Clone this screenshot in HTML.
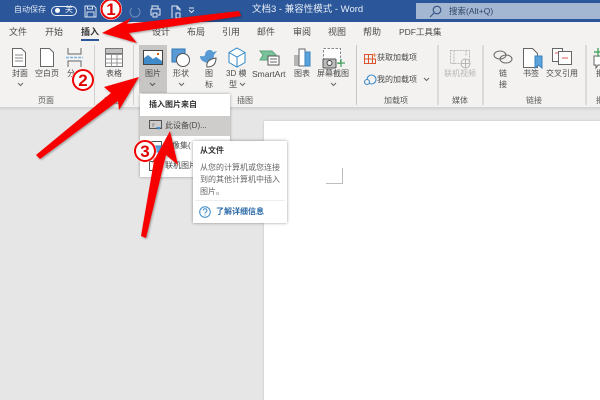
<!DOCTYPE html>
<html><head><meta charset="utf-8">
<style>
html,body{margin:0;padding:0;width:600px;height:400px;overflow:hidden;background:#e6e6e6}
body{position:relative;font-family:"Liberation Sans","Noto Sans CJK SC",sans-serif;color:#444}
#w{position:absolute;left:0;top:0;width:600px;height:400px;filter:blur(.3px)}
.a{position:absolute}
.t{position:absolute;white-space:nowrap;font-size:8px;line-height:12px;color:#4a4a4a;text-align:left}
.tab{position:absolute;top:26px;font-size:9px;line-height:12px;color:#4a4a4a;white-space:nowrap}
.g{position:absolute;top:95px;font-size:8px;line-height:12px;color:#5a5a5a;white-space:nowrap}
.sep{position:absolute;top:45px;width:1px;height:60px;background:#c8c6c4}
svg{position:absolute;overflow:visible}
</style></head><body><div id="w">
<div class="a" style="left:0;top:0;width:600px;height:22px;background:#2b579a"></div>
<div class="a" style="left:0;top:22px;width:600px;height:85px;background:#f3f2f1"></div>
<div class="a" style="left:0;top:107px;width:600px;height:4px;background:linear-gradient(#cfcfcf,#e6e6e6)"></div>
<div class="a" style="left:264px;top:121px;width:336px;height:279px;background:#fff;box-shadow:0 0 2px #bbb"></div>

<!-- title bar -->
<div class="t" style="left:14px;top:4px;color:#dfe6f2">自动保存</div>
<div class="a" style="left:51px;top:6px;width:24px;height:8px;border:1px solid #e8edf5;border-radius:6px"></div>
<div class="a" style="left:55px;top:8px;width:5px;height:5px;border-radius:50%;background:#fff"></div>
<div class="t" style="left:65px;top:4px;color:#e8edf5">关</div>
<svg style="left:84px;top:5px" width="13" height="13" viewBox="0 0 13 13" fill="none" stroke="#d5dfee"><path d="M1 1h9l2 2v9H1zM3.500 1v3h5V1M3 12V7h7v5"/></svg>
<svg style="left:129px;top:6px" width="12" height="12" viewBox="0 0 12 12" fill="none" stroke="#6f8dbb"><path d="M3 2a5 5 0 1 0 6 0"/></svg>
<svg style="left:149px;top:5px" width="13" height="13" viewBox="0 0 13 13" fill="none" stroke="#e4eaf3"><path d="M3 4V1h6v3M2 4h9v6H9M3 10H2V4M4 8h4v4H4z"/></svg>
<svg style="left:170px;top:5px" width="12" height="14" viewBox="0 0 12 14" fill="none" stroke="#e4eaf3"><path d="M2 13V1h5l3 3v2M7 1v3h3M6 8h4v5H6z"/></svg>
<svg style="left:188px;top:8px" width="7" height="5" viewBox="0 0 7 5" fill="none" stroke="#dfe6f2"><path d="M1 0h5M1 2l2.500 2.500L6 2"/></svg>
<div class="t" style="left:252px;top:4px;color:#e6ecf5;font-size:9.500px">文档3 - 兼容性模式 - Word</div>
<div class="a" style="left:416px;top:3px;width:184px;height:16px;background:#a3b6d2"></div>
<svg style="left:429px;top:5px" width="13" height="13" viewBox="0 0 13 13" fill="none" stroke="#33527f" stroke-width="1.100"><circle cx="8" cy="5" r="3.800"/><path d="M5 8l-4 4"/></svg>
<div class="t" style="left:449px;top:5px;color:#2f4668;font-size:8.500px">搜索(Alt+Q)</div>

<!-- tabs -->
<div class="tab" style="left:9px">文件</div>
<div class="tab" style="left:45px">开始</div>
<div class="tab" style="left:81px;font-weight:bold;color:#333">插入</div>
<div class="a" style="left:81px;top:39px;width:18px;height:2px;background:#2b579a"></div>
<div class="tab" style="left:152px">设计</div>
<div class="tab" style="left:187px">布局</div>
<div class="tab" style="left:222px">引用</div>
<div class="tab" style="left:257px">邮件</div>
<div class="tab" style="left:293px">审阅</div>
<div class="tab" style="left:328px">视图</div>
<div class="tab" style="left:363px">帮助</div>
<div class="tab" style="left:399px;font-size:8.500px">PDF工具集</div>

<!-- separators -->
<div class="sep" style="left:94px;background:#d2d0ce"></div>
<div class="sep" style="left:133px;background:#d2d0ce"></div>
<div class="sep" style="left:356px"></div>
<div class="sep" style="left:437px;width:2px;background:#dcdad8"></div>
<div class="sep" style="left:482px;width:2px;background:#dcdad8"></div>
<div class="sep" style="left:585px;width:2px;background:#dcdad8"></div>

<!-- pages group -->
<svg style="left:12px;top:48px" width="14" height="19" viewBox="0 0 14 19" fill="#fff" stroke="#666"><path d="M.5.500h9l4 4v14H.5z"/><path d="M3 7h8M3 10h8M3 13h8" stroke="#888"/></svg>
<div class="t" style="left:12px;top:68px">封面</div>
<svg style="left:17px;top:83px" width="7" height="4" fill="none" stroke="#666"><path d="M1 0l2.500 2.500L6 0"/></svg>
<svg style="left:40px;top:48px" width="14" height="19" viewBox="0 0 14 19" fill="#fff" stroke="#666"><path d="M.5.500h9l4 4v14H.5z"/></svg>
<div class="t" style="left:35px;top:68px">空白页</div>
<svg style="left:66px;top:48px" width="17" height="19" viewBox="0 0 17 19" fill="none" stroke="#666"><path d="M2 0v6h13V0M2 19v-6h13v6"/><path d="M0 9.500h17" stroke="#7fb2dd" stroke-width="1.500" stroke-dasharray="3 1"/></svg>
<div class="t" style="left:67px;top:68px">分</div>
<div class="g" style="left:38px">页面</div>

<!-- table -->
<svg style="left:105px;top:48px" width="18" height="19" viewBox="0 0 18 19" fill="#fff" stroke="#777"><path d="M.5.500h17v18H.5z"/><path d="M6.500 .5v18M12 .5v18M.5 6.500h17M.5 11h17M.5 15h17" stroke="#999"/><path d="M.5 .5h17v5H.5z" fill="#c0c0c0"/></svg>
<div class="t" style="left:106px;top:68px">表格</div>
<div class="g" style="left:104px">表格</div>

<!-- pictures -->
<div class="a" style="left:139px;top:45px;width:28px;height:48px;background:#c8c6c4"></div>
<svg style="left:143px;top:50px" width="20" height="15" viewBox="0 0 20 15"><rect x=".5" y=".5" width="19" height="14" fill="#fff" stroke="#444"/><path d="M1 14V8l4-3 5 4 3-2 6 4v3z" fill="#3f8bc9"/><rect x="14" y="3" width="2" height="2" fill="#c55a11"/></svg>
<div class="t" style="left:145px;top:68px">图片</div>
<svg style="left:149px;top:83px" width="7" height="4" fill="none" stroke="#555"><path d="M1 0l2.500 2.500L6 0"/></svg>

<svg style="left:171px;top:48px" width="20" height="20" viewBox="0 0 20 20"><rect x="1" y="1" width="13" height="13" fill="#5b9bd5" stroke="#2e75b6"/><circle cx="12" cy="12" r="6.500" fill="#fff" stroke="#555"/></svg>
<div class="t" style="left:173px;top:68px">形状</div>
<svg style="left:178px;top:83px" width="7" height="4" fill="none" stroke="#666"><path d="M1 0l2.500 2.500L6 0"/></svg>

<svg style="left:199px;top:47px" width="19" height="22" viewBox="0 0 19 22"><path d="M1 9c2 0 4 1 5-1 0-5 6-7 8-3 1 0 3-1 4-1l-3 4c0 4-2 7-6 8-5-1-8-3-8-7z" fill="#5b9bd5"/><path d="M8 20c-1-5 2-8 9-9 0 6-3 9-9 9z" fill="#fff" stroke="#555"/></svg>
<div class="t" style="left:205px;top:68px">图</div>
<div class="t" style="left:205px;top:79px">标</div>

<svg style="left:228px;top:47px" width="18" height="21" viewBox="0 0 18 21" fill="#fff" stroke="#2f86c5"><path d="M9 1l8 4.500v10L9 20l-8-4.500v-10z"/><path d="M1 5.500L9 10l8-4.500M9 10v10" fill="none"/></svg>
<div class="t" style="left:226px;top:68px">3D 模</div>
<div class="t" style="left:229px;top:79px">型</div>
<svg style="left:239px;top:83px" width="7" height="4" fill="none" stroke="#666"><path d="M1 0l2.500 2.500L6 0"/></svg>

<svg style="left:260px;top:50px" width="19" height="16" viewBox="0 0 19 16"><path d="M0 1h12l4 4-3 5H0l3-5z" fill="#7ac29a" stroke="#5aa77f"/><rect x="8" y="6" width="11" height="9" fill="#fff" stroke="#555"/><path d="M10 9h7M10 12h7" stroke="#666"/></svg>
<div class="t" style="left:252px;top:68px;font-size:8.500px">SmartArt</div>

<svg style="left:293px;top:48px" width="18" height="19" viewBox="0 0 18 19"><rect x="1" y="7" width="6" height="11" fill="#b5b5b5"/><rect x="6" y="1" width="6" height="17" fill="#fff" stroke="#666"/><rect x="12" y="4" width="5" height="14" fill="#5ba3dc" stroke="#3b83bd"/></svg>
<div class="t" style="left:294px;top:68px">图表</div>

<svg style="left:323px;top:48px" width="22" height="20" viewBox="0 0 22 20"><rect x=".5" y=".5" width="17" height="15" fill="#fff" stroke="#888" stroke-dasharray="2.500 1.500"/><rect x="0" y="11" width="13" height="9" rx="1" fill="#bdbdbd" stroke="#555"/><circle cx="6.500" cy="15" r="2.500" fill="#eee" stroke="#444"/><path d="M18 11v8M14 15h8" stroke="#3fa35a" stroke-width="1.200"/></svg>
<div class="t" style="left:317px;top:68px">屏幕截图</div>
<svg style="left:330px;top:83px" width="7" height="4" fill="none" stroke="#666"><path d="M1 0l2.500 2.500L6 0"/></svg>
<div class="g" style="left:237px">插图</div>

<!-- addins -->
<svg style="left:364px;top:53px" width="13" height="11" viewBox="0 0 13 11" fill="none" stroke="#d8552d"><path d="M.5 1.500h8v9h-8zM.5 6h11v4.500h-3M4.500 1.500v9"/><path d="M10.500 0v4M8.500 2h4" stroke="#e58a5e"/></svg>
<div class="t" style="left:377px;top:52px">获取加载项</div>
<svg style="left:364px;top:75px" width="13" height="10" viewBox="0 0 13 10" fill="none" stroke="#3f8bc9" stroke-width="1.100"><circle cx="7.500" cy="4.500" r="4.500"/><circle cx="3" cy="7" r="2.500" fill="#f3f2f1"/></svg>
<div class="t" style="left:377px;top:74px">我的加载项</div>
<svg style="left:423px;top:78px" width="7" height="4" fill="none" stroke="#666"><path d="M1 0l2.500 2.500L6 0"/></svg>
<div class="g" style="left:384px">加载项</div>

<!-- media -->
<svg style="left:450px;top:50px" width="21" height="19" viewBox="0 0 21 19" fill="none" stroke="#b5b5b5"><path d="M.5.500h19v13H.5zM4 .5v13M16 .5v6" stroke-dasharray="2 1"/><circle cx="15.500" cy="13.500" r="4.500" fill="#f3f2f1"/><path d="M11 13.500h9M15.500 9v9"/></svg>
<div class="t" style="left:444px;top:68px;color:#b8b6b4">联机视频</div>
<div class="g" style="left:452px">媒体</div>

<!-- links -->
<svg style="left:493px;top:50px" width="20" height="14" viewBox="0 0 20 14" fill="none" stroke="#666"><ellipse cx="7" cy="5" rx="6" ry="4"/><ellipse cx="13" cy="9" rx="6" ry="4"/></svg>
<div class="t" style="left:499px;top:68px">链</div>
<div class="t" style="left:499px;top:79px">接</div>
<svg style="left:523px;top:48px" width="20" height="20" viewBox="0 0 20 20"><path d="M.5.500h9l5 5v14H.5z" fill="#fff" stroke="#666"/><path d="M12 8h7v12l-3.500-3-3.500 3z" fill="#5ba3dc" stroke="#3b83bd"/></svg>
<div class="t" style="left:523px;top:68px">书签</div>
<svg style="left:552px;top:48px" width="20" height="17" viewBox="0 0 20 17"><path d="M.5.500h10v13H.5z" fill="#fff" stroke="#666"/><path d="M6.500 3.500h13v13h-13z" fill="#fff" stroke="#666"/><path d="M3 5h3M10 10h6" stroke="#e05a5a"/></svg>
<div class="t" style="left:546px;top:68px">交叉引用</div>
<div class="g" style="left:526px">链接</div>

<!-- right clipped -->
<svg style="left:594px;top:47px" width="8" height="22" viewBox="0 0 8 22"><path d="M0 9h8v9H4l-2 3v-3H0z" fill="#fff" stroke="#666"/><path d="M4 1v9M0 5h8" stroke="#4ca864" stroke-width="1.400"/></svg>
<div class="t" style="left:596px;top:68px">批</div>
<div class="g" style="left:596px">批</div>

<!-- dropdown -->
<div class="a" style="left:140px;top:94px;width:90px;height:83px;background:#fff;box-shadow:0 0 3px rgba(0,0,0,.35)"></div>
<div class="t" style="left:149px;top:99px;color:#333;font-weight:bold">插入图片来自</div>
<div class="a" style="left:140px;top:116px;width:90px;height:20px;background:#cfcdcb"></div>
<svg style="left:149px;top:120px" width="13" height="12" viewBox="0 0 13 12" fill="none" stroke="#555"><path d="M.5.500h12v8H.5z"/><path d="M3 4h3M3 6h2" stroke="#888"/><path d="M7 7h5l-2.500 3z" fill="#4a90d0" stroke="none"/></svg>
<div class="t" style="left:165px;top:120px">此设备(D)...</div>
<svg style="left:149px;top:141px" width="13" height="12" viewBox="0 0 13 12" fill="none" stroke="#555"><path d="M.5.500h12v9H.5z"/><path d="M5 5h7v6H5z" fill="#5ba3dc" stroke="#3b83bd"/></svg>
<div class="t" style="left:172px;top:140px">像集(</div>
<svg style="left:149px;top:161px" width="13" height="13" viewBox="0 0 13 13" fill="none" stroke="#555"><path d="M.5.500h12v9H.5z"/><circle cx="9" cy="9" r="3.500" fill="#2e86d1" stroke="#1f6fb5"/></svg>
<div class="t" style="left:165px;top:160px">联机图片</div>

<!-- tooltip -->
<div class="a" style="left:193px;top:141px;width:94px;height:82px;background:#fff;box-shadow:0 0 3px rgba(0,0,0,.4)"></div>
<div class="t" style="left:200px;top:145px;color:#333;font-weight:bold">从文件</div>
<div class="t" style="left:200px;top:162px;color:#666;line-height:12px">从您的计算机或您连接<br>到的其他计算机中插入<br>图片。</div>
<div class="a" style="left:195px;top:200px;width:90px;height:1px;background:#eee"></div>
<svg style="left:199px;top:206px" width="12" height="12" viewBox="0 0 12 12" fill="none" stroke="#3f8bc9"><circle cx="6" cy="6" r="5.300"/><path d="M4.300 4.500a1.800 1.800 0 1 1 2.500 1.700c-.6.300-.8.600-.8 1.300M6 8.500v1"/></svg>
<div class="t" style="left:216px;top:206px;color:#2b6aa8;font-weight:bold">了解详细信息</div>

<!-- page margin mark -->
<svg style="left:326px;top:168px" width="17" height="16" fill="none" stroke="#bdbdbd"><path d="M16.500 0v15.500H0"/></svg>

<!-- arrows -->
<svg style="left:0;top:0" width="600" height="400" viewBox="0 0 600 400">
<defs><filter id="s" x="-20%" y="-20%" width="140%" height="140%"><feDropShadow dx="1" dy="1" stdDeviation="1" flood-color="#000" flood-opacity=".35"/></filter></defs>
<g filter="url(#s)" fill="#f80000">
<path d="M102 33L131 18 127 24 239 11 241 16 129 33 137 43z"/>
<path d="M139 77L119 110 118 101 40 159 36 155 111 93 104 87z"/>
<path d="M170 131L178 165 166 155 146 238 141 236 155 155 152 164z"/>
</g>
<g font-family="Liberation Sans,sans-serif" font-weight="bold" font-size="17" text-anchor="middle">
<circle cx="111" cy="9" r="11" fill="#fff"/><circle cx="111" cy="9" r="9.500" fill="#fff" stroke="#f00000" stroke-width="2"/><text x="111" y="15" fill="#e00000">1</text>
<circle cx="83" cy="80" r="11.500" fill="#fff"/><circle cx="83" cy="80" r="10" fill="#fff" stroke="#f00000" stroke-width="2"/><text x="83" y="86" fill="#e00000">2</text>
<circle cx="145" cy="151" r="11.500" fill="#fff"/><circle cx="145" cy="151" r="10" fill="#fff" stroke="#f00000" stroke-width="2"/><text x="145" y="157" fill="#e00000">3</text>
</g>
</svg>
</div></body></html>
